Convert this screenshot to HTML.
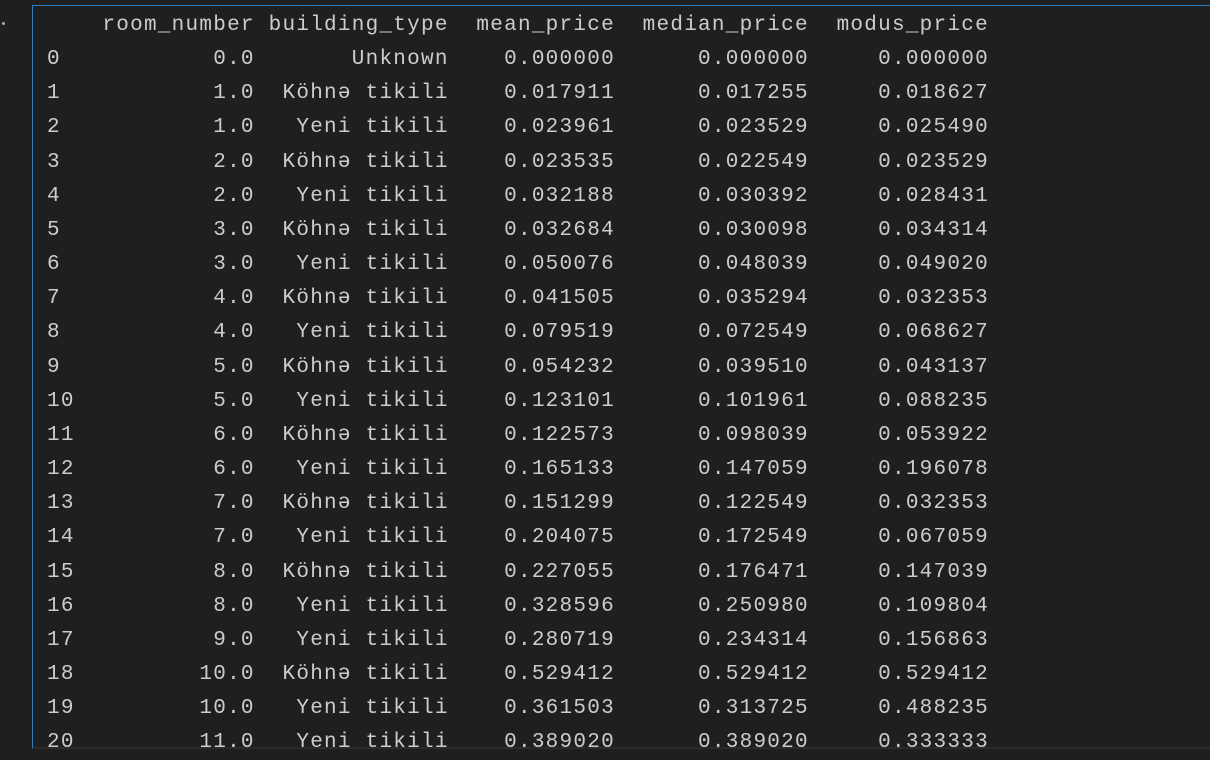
<!DOCTYPE html>
<html><head><meta charset="utf-8"><style>
html,body{margin:0;padding:0;background:#1f1f1f;width:1210px;height:754px;overflow:hidden}
.box{position:absolute;left:32px;top:5px;width:1200px;height:744px;border-left:1px solid #2f7fc1;border-top:1px solid #2f7fc1;border-bottom:2px solid #2b2b2b;box-sizing:border-box}
.dot{position:absolute;left:2px;top:22px;width:3px;height:3px;background:#aaa;border-radius:50%}
pre{position:absolute;left:47px;top:9px;margin:0;font-family:"Liberation Mono","DejaVu Sans Mono",monospace;font-size:21px;letter-spacing:1.25px;line-height:34.15px;color:#cccccc}
</style></head><body>
<div class="dot"></div>
<div class="box"></div>
<pre>    room_number building_type  mean_price  median_price  modus_price
0           0.0       Unknown    0.000000      0.000000     0.000000
1           1.0  Köhnə tikili    0.017911      0.017255     0.018627
2           1.0   Yeni tikili    0.023961      0.023529     0.025490
3           2.0  Köhnə tikili    0.023535      0.022549     0.023529
4           2.0   Yeni tikili    0.032188      0.030392     0.028431
5           3.0  Köhnə tikili    0.032684      0.030098     0.034314
6           3.0   Yeni tikili    0.050076      0.048039     0.049020
7           4.0  Köhnə tikili    0.041505      0.035294     0.032353
8           4.0   Yeni tikili    0.079519      0.072549     0.068627
9           5.0  Köhnə tikili    0.054232      0.039510     0.043137
10          5.0   Yeni tikili    0.123101      0.101961     0.088235
11          6.0  Köhnə tikili    0.122573      0.098039     0.053922
12          6.0   Yeni tikili    0.165133      0.147059     0.196078
13          7.0  Köhnə tikili    0.151299      0.122549     0.032353
14          7.0   Yeni tikili    0.204075      0.172549     0.067059
15          8.0  Köhnə tikili    0.227055      0.176471     0.147039
16          8.0   Yeni tikili    0.328596      0.250980     0.109804
17          9.0   Yeni tikili    0.280719      0.234314     0.156863
18         10.0  Köhnə tikili    0.529412      0.529412     0.529412
19         10.0   Yeni tikili    0.361503      0.313725     0.488235
20         11.0   Yeni tikili    0.389020      0.389020     0.333333</pre>
</body></html>
